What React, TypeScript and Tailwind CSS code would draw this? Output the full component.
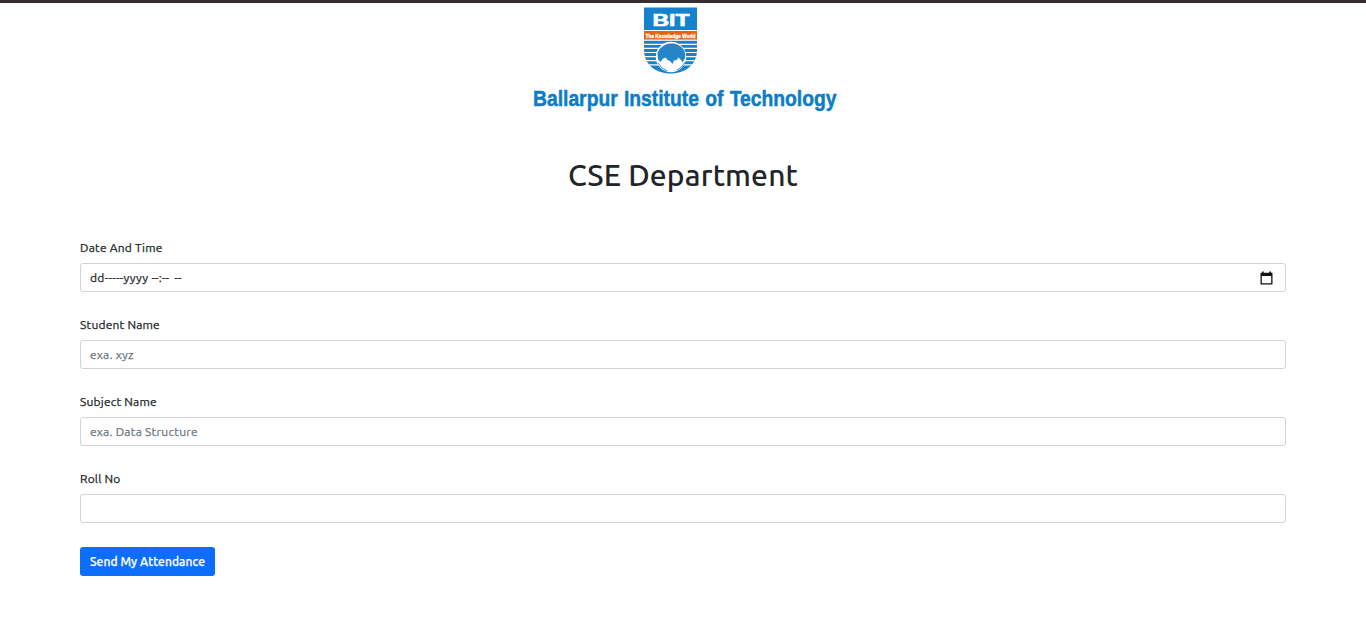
import type { ReactNode } from "react";

function Crest() {
  return (
    <svg width="344" height="108" viewBox="513 6 344 108" className="block overflow-visible" role="img" aria-label="Ballarpur Institute of Technology">
      <defs>
        <clipPath id="shield">
          <path d="M644 7.5H697V50C697 64 686 73.5 670.5 73.5S644 64 644 50Z" />
        </clipPath>
      </defs>
      <g clipPath="url(#shield)">
        <rect x="644" y="7" width="53" height="67" fill="#1682cb" />
        <rect x="644" y="30" width="53" height="1.2" fill="#fff" />
        <rect x="644" y="31" width="53" height="9" fill="#e8620f" />
        <rect x="644" y="39.6" width="53" height="1.2" fill="#fff" />
        <path d="M644 44.3H697M644 48.4H697M644 52.5H697M644 56.6H697M644 60.7H697M644 64.8H697" stroke="#fff" strokeWidth="1.2" />
        <circle cx="671" cy="57" r="15.2" fill="#fff" />
        <path d="M657.5 54C658 50 661 47 665 45C669 43 675 43 679 45.5C684 48 686 53 685 58L682.5 62.5L681 60L678.5 57.5L676.5 60L674 60.5L672.5 64L670 61L667.5 60L665.5 57.5L662.5 59L660.5 62L658 59.5Z" fill="#2485c8" />
        <path d="M658 63Q662 69.5 667 70.8M677 70Q682 68 685 62" fill="none" stroke="#1682cb" strokeWidth="0.9" />
      </g>
      <text x="652.5" y="25.5" textLength="37" lengthAdjust="spacingAndGlyphs" fill="#fff" stroke="#fff" strokeWidth="0.6" fontFamily="Liberation Sans, sans-serif" fontSize="16" fontWeight="700">BIT</text>
      <text x="645.5" y="38" textLength="50" lengthAdjust="spacingAndGlyphs" fill="#fff" stroke="#fff" strokeWidth="0.3" fontFamily="Liberation Sans, sans-serif" fontSize="5.8" fontWeight="700">The Knowledge World</text>
      <text x="533" y="106" textLength="303.5" lengthAdjust="spacingAndGlyphs" wordSpacing="1" fill="#0c7cc4" stroke="#0c7cc4" strokeWidth="0.5" fontFamily="Liberation Sans Narrow, Liberation Sans, sans-serif" fontSize="22.5" fontWeight="700">Ballarpur Institute of Technology</text>
    </svg>
  );
}

function CalendarIcon() {
  return (
    <svg width="13" height="14" viewBox="0 0 13 14" className="block" aria-hidden="true">
      <path d="M2 .5H3.7V1.8H9.3V.5H11V1.8H12Q12.5 1.8 12.5 2.5V12.8Q12.5 13.5 12 13.5H1Q.5 13.5 .5 12.8V2.5Q.5 1.8 1 1.8H2ZM1.8 5V12.2H11.2V5Z" fill="#111" fillRule="evenodd" />
    </svg>
  );
}

function Field({ label, children }: { label: string; children?: ReactNode }) {
  return (
    <div className="mb-6 flex flex-col items-stretch">
      <div className="mb-[6px] flex h-[18px] items-center text-[12px] leading-[18px] tracking-[0.2px] text-[#212529] [-webkit-text-stroke:0.25px]">{label}</div>
      <div className="flex h-[29px] items-center justify-between rounded-[3px] border border-[#ced4da] pr-3 pl-[9px] text-[12px] tracking-[0.23px] text-[#6c757d] [-webkit-text-stroke:0.25px]">
        {children}
      </div>
    </div>
  );
}

export default function App() {
  return (
    <div className="flex h-[626px] flex-col overflow-hidden border-t-[3px] border-[#352f33] bg-white font-['Ubuntu','Noto_Sans',sans-serif]">
      <header className="flex flex-col items-center pt-[3px]">
        <div className="pl-[4px]">
          <Crest />
        </div>
        <h1 className="mt-[40px] h-[42px] text-[30px] leading-[42px] font-medium tracking-[0.15px] whitespace-nowrap text-[#212529]">
          CSE Department
        </h1>
      </header>
      <main className="mx-20 mt-[43px]">
        <Field label="Date And Time">
          <span className="flex gap-[3px] text-[#212529]">
            <span className="tracking-[0.3px]">dd-----yyyy</span>
            <span className="tracking-[0.2px]">--:--</span>
            <span className="ml-[2px] tracking-[0.2px]">--</span>
          </span>
          <CalendarIcon />
        </Field>
        <Field label="Student Name">
          <span>exa. xyz</span>
        </Field>
        <Field label="Subject Name">
          <span>exa. Data Structure</span>
        </Field>
        <Field label="Roll No" />
        <button className="flex h-[29px] w-[135px] items-center justify-center rounded-[3px] bg-[#0d6efd] text-[12px] font-medium tracking-[0.08px] whitespace-nowrap text-white [-webkit-text-stroke:0.25px]">
          Send My Attendance
        </button>
      </main>
    </div>
  );
}
